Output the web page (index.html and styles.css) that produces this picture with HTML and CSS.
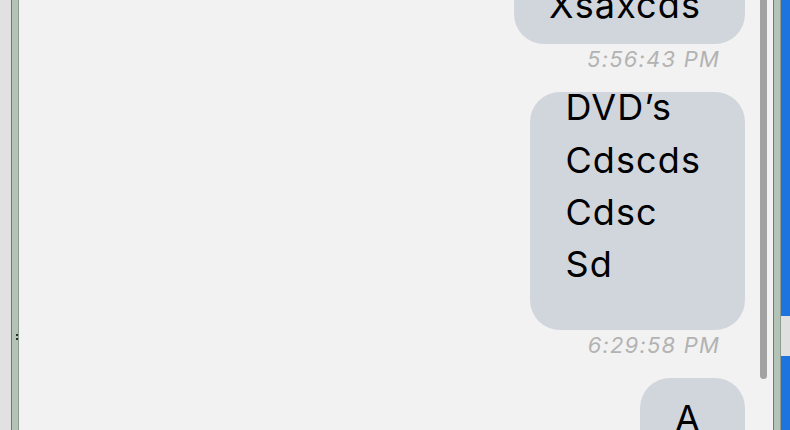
FILE: index.html
```html
<!DOCTYPE html>
<html lang="en">
<head>
<meta charset="utf-8">
<title>Messages</title>
<link rel="stylesheet" href="styles.css">
</head>
<body>
<div class="window">
  <div class="outer-left"></div>
  <div class="frame frame-left">
    <span class="grip grip-a"></span>
    <span class="grip grip-b"></span>
  </div>
  <div class="chat">
    <div class="thread">
      <div class="msg">
        <div class="bubble bubble-first"><div class="text">Xsaxcds</div></div>
        <div class="time">5:56:43 PM</div>
      </div>
      <div class="msg">
        <div class="bubble bubble-multi"><div class="text text-shift">DVD’s<br>Cdscds<br>Cdsc<br>Sd</div></div>
        <div class="time">6:29:58 PM</div>
      </div>
      <div class="msg">
        <div class="bubble"><div class="text">A</div></div>
      </div>
    </div>
    <div class="scrollbar"></div>
  </div>
  <div class="frame frame-right"></div>
  <div class="outer-right">
    <div class="blue blue-top"></div>
    <div class="gray-patch"></div>
    <div class="blue blue-bottom"></div>
  </div>
</div>
</body>
</html>
```

FILE: styles.css
```css
html, body {
  margin: 0;
  padding: 0;
  width: 790px;
  height: 430px;
  overflow: hidden;
  background: #f2f2f2;
}

.window {
  display: flex;
  width: 790px;
  height: 430px;
}

.outer-left {
  width: 11px;
  flex: none;
  background: #e1e1e1;
}

.frame {
  width: 6px;
  flex: none;
  background: #b3c3b5;
  border-left: 1px solid #6f7a72;
  border-right: 1px solid #8e9c90;
  position: relative;
}

.grip {
  position: absolute;
  left: 4px;
  width: 2px;
  height: 2px;
  background: #2a302b;
}
.grip-a { top: 334px; }
.grip-b { top: 338px; }

.chat {
  width: 754px;
  flex: none;
  position: relative;
  overflow: hidden;
  background: #f2f2f2;
}

.thread {
  display: flex;
  flex-direction: column;
  align-items: flex-end;
  padding-right: 28px;
  margin-top: -35px;
  gap: 21px;
}

.msg {
  display: flex;
  flex-direction: column;
  align-items: flex-end;
}

.bubble {
  background: #d1d6dd;
  border-radius: 30px;
  padding: 14px 44px 14px 35px;
  color: #000;
  font-family: Inter, "Liberation Sans", sans-serif;
  font-size: 36px;
  line-height: 52.3px;
  letter-spacing: 1.1px;
}

.bubble-first {
  padding-bottom: 13px;
}

.bubble-multi {
  padding-top: 0;
  padding-bottom: 40px;
}

.text-shift {
  margin-top: -11px;
}

.time {
  margin-top: 3px;
  margin-right: 25px;
  font-family: Inter, "Liberation Sans", sans-serif;
  font-style: italic;
  font-size: 22px;
  line-height: 24px;
  color: #b3b3b3;
  letter-spacing: 1.2px;
}

.scrollbar {
  position: absolute;
  top: -10px;
  left: 741px;
  width: 7px;
  height: 389px;
  border-radius: 4px;
  background: #a2a2a2;
}

.outer-right {
  flex: 1;
  display: flex;
  flex-direction: column;
}

.blue {
  background: #1d74df;
}
.blue-top {
  height: 316px;
}
.gray-patch {
  height: 40px;
  background: #e0e0e0;
}
.blue-bottom {
  flex: 1;
}
```
